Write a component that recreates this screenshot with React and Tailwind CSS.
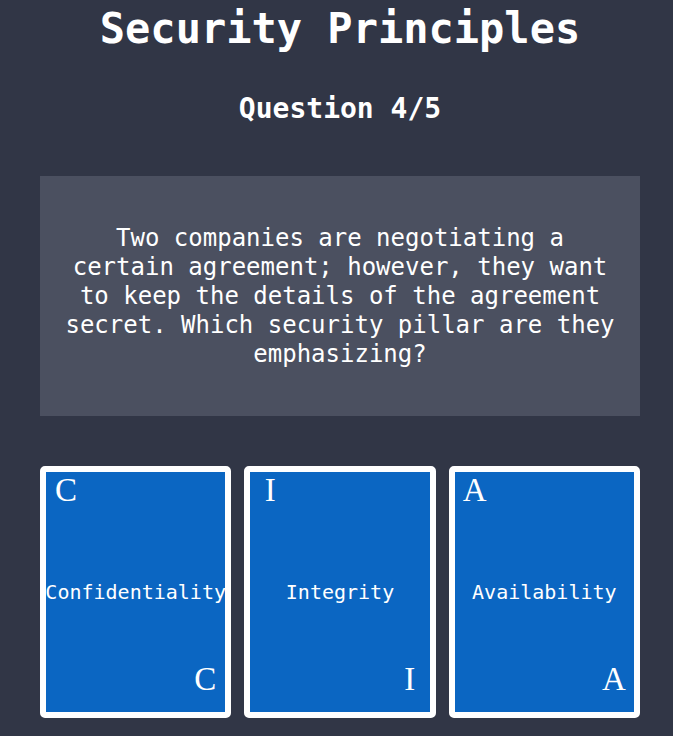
const CARDS = [
  { letter: 'C', label: 'Confidentiality' },
  { letter: 'I', label: 'Integrity' },
  { letter: 'A', label: 'Availability' },
]

function Card({ letter, label }) {
  return (
    <div className="flex h-[252px] flex-col rounded-[5px] border-[6px] border-white bg-[#0b66c2] text-white">
      <div className="h-0 w-[40px] text-center font-['Liberation_Serif',serif] text-[33px] leading-[36px]">
        {letter}
      </div>
      <div className="flex flex-1 items-center justify-center whitespace-nowrap text-[20px]">
        {label}
      </div>
      <div className="flex h-0 items-end justify-end font-['Liberation_Serif',serif] text-[33px] leading-[36px] -translate-y-[15px]">
        <span className="w-[40px] text-center">{letter}</span>
      </div>
    </div>
  )
}

export default function App() {
  return (
    <div className="min-h-[736px] overflow-hidden bg-[#313646] font-['DejaVu_Sans_Mono',monospace] text-white">
      <div className="w-[680px]">
        {/* Header */}
        <h1 className="pt-[4px] text-center text-[42px] font-bold leading-[49px]">Security Principles</h1>
        <h2 className="mt-[39px] text-center text-[28px] font-bold leading-[33px]">Question 4/5</h2>

        {/* Question */}
        <div className="mx-[40px] mt-[51px] flex h-[240px] items-center justify-center bg-[#4b5060] px-[20px] text-center text-[24px] leading-[29px]">
          <p>
            Two companies are negotiating a certain agreement; however, they want to keep the details of the agreement secret. Which security pillar are they emphasizing?
          </p>
        </div>

        {/* Answers */}
        <div className="mx-[40px] mt-[50px] grid grid-cols-3 gap-[13px]">
          {CARDS.map((c) => (
            <Card key={c.letter} {...c} />
          ))}
        </div>
      </div>
    </div>
  )
}
